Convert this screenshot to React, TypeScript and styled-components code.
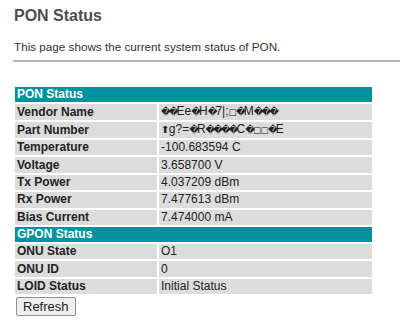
import React from "react";
import styled, { createGlobalStyle } from "styled-components";

type Row = {
    label: string;
    value: string;
};

type Section = {
    title: string;
    rows: Array<Row>;
};

type GlyphProps = {
    $kind: "diamond" | "box" | "arrow";
};

const sections: Array<Section> = [
    {
        title: "PON Status",
        rows: [
            { label: "Vendor Name", value: "\uFFFD\uFFFDEe\uFFFDH\uFFFD7|;\u25A1\uFFFDM\uFFFD\uFFFD\uFFFD" },
            { label: "Part Number", value: "\u2B06g?=\uFFFDR\uFFFD\uFFFD\uFFFD\uFFFDC\uFFFD\u25A1\u25A1\uFFFDE" },
            { label: "Temperature", value: "-100.683594 C" },
            { label: "Voltage", value: "3.658700 V" },
            { label: "Tx Power", value: "4.037209 dBm" },
            { label: "Rx Power", value: "7.477613 dBm" },
            { label: "Bias Current", value: "7.474000 mA" },
        ],
    },
    {
        title: "GPON Status",
        rows: [
            { label: "ONU State", value: "O1" },
            { label: "ONU ID", value: "0" },
            { label: "LOID Status", value: "Initial Status" },
        ],
    },
];

const glyphKinds: Record<string, GlyphProps["$kind"]> = {
    "\uFFFD": "diamond",
    "\u25A1": "box",
    "\u2B06": "arrow",
};

const GlobalStyle = createGlobalStyle`
    body {
        margin: 0;
        background: #ffffff;
        font-family: "Liberation Sans", Arial, sans-serif;
    }
`;

const Page = styled.div`
    padding: 6px 0 0 14px;
    color: #222;
`;

const Title = styled.h1`
    margin: 0;
    font-size: 16px;
    font-weight: bold;
    color: #4d4d4d;
    line-height: 20px;
`;

const Intro = styled.p`
    margin: 13px 0 0;
    font-size: 11.7px;
    line-height: 15px;
    color: #333;
`;

const Rule = styled.hr`
    margin: 6px 0 0 -1px;
    border: none;
    border-top: 2px solid #b3b3b3;
    height: 0;
`;

const StatusTable = styled.table`
    margin: 23px 0 0 -1px;
    border-collapse: separate;
    border-spacing: 2px;
    width: 361px;
    font-size: 12px;
`;

const HeaderCell = styled.td`
    background: #00939f;
    color: #ffffff;
    font-weight: bold;
    height: 15px;
    padding: 0 0 0 2px;
    line-height: 15px;
`;

const LabelCell = styled.td`
    background: #dcdcdc;
    font-weight: bold;
    width: 140px;
    height: 15.4px;
    padding: 0 0 0 2px;
    line-height: 15px;
`;

const ValueCell = styled.td`
    background: #dcdcdc;
    height: 15.4px;
    padding: 0 0 0 2px;
    line-height: 15px;
    white-space: nowrap;
`;

// the unreadable bytes from the module come out as replacement glyphs
const Glyph = styled.span<GlyphProps>`
    font-family: "DejaVu Sans", sans-serif;
    font-size: ${({ $kind }) => ($kind === "arrow" ? "10px" : $kind === "box" ? "8.5px" : "9.5px")};
    letter-spacing: ${({ $kind }) => ($kind === "diamond" ? "-2px" : "-0.6px")};
    line-height: 15px;
`;

const RefreshButton = styled.button`
    margin: 1px 0 0 2px;
    font-family: "Liberation Sans", Arial, sans-serif;
    font-size: 13px;
    padding: 1px 6px;
    height: 19px;
    background: #efefef;
    border: 1px solid #8f8f8f;
    border-radius: 2px;
    color: #222;
`;

const renderValue = (value: string) =>
    Array.from(value).map((ch, i) => {
        const kind = glyphKinds[ch];
        return kind ? (
            <Glyph key={i} $kind={kind}>
                {ch}
            </Glyph>
        ) : (
            ch
        );
    });

const App: React.FC = () => {
    return (
        <>
            <GlobalStyle />
            <Page>
                <Title>PON Status</Title>
                <Intro>This page shows the current system status of PON.</Intro>
                <Rule />
                <StatusTable>
                    <tbody>
                        {sections.map(({ title, rows }) => (
                            <React.Fragment key={title}>
                                <tr>
                                    <HeaderCell colSpan={2}>{title}</HeaderCell>
                                </tr>
                                {rows.map(({ label, value }) => (
                                    <tr key={label}>
                                        <LabelCell>{label}</LabelCell>
                                        <ValueCell>{renderValue(value)}</ValueCell>
                                    </tr>
                                ))}
                            </React.Fragment>
                        ))}
                    </tbody>
                </StatusTable>
                <RefreshButton type="button">Refresh</RefreshButton>
            </Page>
        </>
    );
};

export default App;
